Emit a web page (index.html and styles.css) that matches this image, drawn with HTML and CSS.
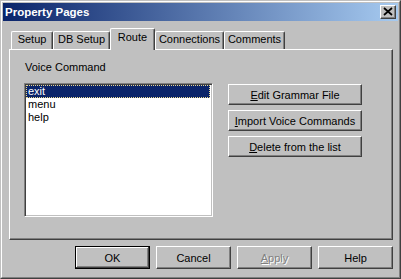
FILE: index.html
```html
<!DOCTYPE html>
<html>
  <head>
    <meta charset="utf-8">
    <title>Property Pages</title>
    <link rel="stylesheet" href="styles.css">
  </head>
  <body>
    <div class="window">
      <div class="frame">
        <div class="titlebar">
          <span class="title">Property Pages</span>
          <div class="close">
            <svg width="16" height="14" viewBox="0 0 16 14">
              <path d="M4 3 L12 10 M12 3 L4 10" stroke="#000" stroke-width="1.7" fill="none"/>
            </svg>
          </div>
        </div>
        <div class="tabs">
          <div class="tab tab-setup">Setup</div>
          <div class="tab tab-db">DB Setup</div>
          <div class="tab tab-route selected">Route</div>
          <div class="tab tab-conn">Connections</div>
          <div class="tab tab-comments">Comments</div>
        </div>
        <div class="panel">
          <div class="label">Voice Command</div>
          <div class="panel-row">
            <div class="listbox">
              <div class="item selected">exit</div>
              <div class="item">menu</div>
              <div class="item">help</div>
            </div>
            <div class="actions">
              <div class="btn btn-wide"><u>E</u>dit Grammar File</div>
              <div class="btn btn-wide"><u>I</u>mport Voice Commands</div>
              <div class="btn btn-wide"><u>D</u>elete from the list</div>
            </div>
          </div>
        </div>
        <div class="footer">
          <div class="btn btn-default">OK</div>
          <div class="btn">Cancel</div>
          <div class="btn disabled"><u>A</u>pply</div>
          <div class="btn">Help</div>
        </div>
      </div>
    </div>
  </body>
</html>
```

FILE: styles.css
```css
* {
  box-sizing: border-box;
}

body {
  margin: 0;
  background: #c0c0c0;
  font-family: "Liberation Sans", Arial, sans-serif;
  font-size: 11px;
  color: #000;
}

.window {
  width: 401px;
  height: 279px;
  border: 1px solid;
  border-color: #c0c0c0 #404040 #404040 #c0c0c0;
  background: #c0c0c0;
}

.frame {
  height: 100%;
  border: 1px solid;
  border-color: #fff #808080 #808080 #fff;
  padding: 1px;
}

.titlebar {
  height: 18px;
  display: flex;
  align-items: center;
  justify-content: space-between;
  padding: 0 2px 0 2px;
  background: linear-gradient(to right, #0a246a, #a6caf0);
}

.title {
  color: #fff;
  font-weight: bold;
  font-size: 11.5px;
}

.close {
  width: 16px;
  height: 14px;
  border: 1px solid;
  border-color: #fff #404040 #404040 #fff;
  box-shadow: inset -1px -1px #808080;
  background: #c0c0c0;
  position: relative;
}

.close svg {
  position: absolute;
  left: -1px;
  top: -1px;
}

.tabs {
  display: flex;
  align-items: flex-end;
  height: 21px;
  margin: 7px 0 0 8px;
}

.tab {
  height: 18px;
  border: 1px solid;
  border-bottom: none;
  border-color: #fff #404040 #fff #fff;
  border-radius: 2px 2px 0 0;
  box-shadow: inset -1px 0 #808080;
  padding-top: 1px;
  line-height: 13px;
  text-align: center;
  background: #c0c0c0;
}

.tab.selected {
  height: 22px;
  margin-bottom: -1px;
  padding-top: 2px;
  position: relative;
  z-index: 1;
}

.tab-setup { width: 42px; }
.tab-db { width: 57px; }
.tab-route { width: 45px; }
.tab-conn { width: 69px; }
.tab-comments { width: 61px; }

.panel {
  height: 191px;
  margin: 0 5px 0 6px;
  border: 1px solid;
  border-color: #fff #404040 #404040 #fff;
  box-shadow: inset -1px -1px #808080;
  padding: 11px 0 0 14px;
}

.label {
  line-height: 13px;
  padding-left: 1px;
  margin-bottom: 9px;
}

.panel-row {
  display: flex;
}

.listbox {
  width: 189px;
  height: 134px;
  border: 1px solid;
  border-color: #808080 #fff #fff #808080;
  box-shadow: inset 1px 1px #404040, inset -1px -1px #c0c0c0;
  background: #fff;
  padding: 1px 2px 0 1px;
}

.item {
  height: 13px;
  line-height: 13px;
  padding-left: 2px;
}

.item.selected {
  background: #0a246a;
  color: #fff;
  outline: 1px dotted #e8d890;
  outline-offset: -1px;
}

.actions {
  display: flex;
  flex-direction: column;
  gap: 5px;
  margin: 1px 0 0 15px;
}

.btn {
  width: 75px;
  height: 23px;
  border: 1px solid;
  border-color: #fff #404040 #404040 #fff;
  box-shadow: inset -1px -1px #808080;
  display: flex;
  align-items: center;
  justify-content: center;
  background: #c0c0c0;
}

.btn-wide {
  width: 134px;
  height: 21px;
}

.btn-default {
  border-color: #000;
  box-shadow: inset -1px -1px #404040, inset 1px 1px #fff, inset -2px -2px #808080;
}

.btn.disabled {
  color: #808080;
  text-shadow: 1px 1px #fff;
}

.footer {
  display: flex;
  justify-content: flex-end;
  gap: 6px;
  margin-top: 6px;
  padding-right: 5px;
}
```
